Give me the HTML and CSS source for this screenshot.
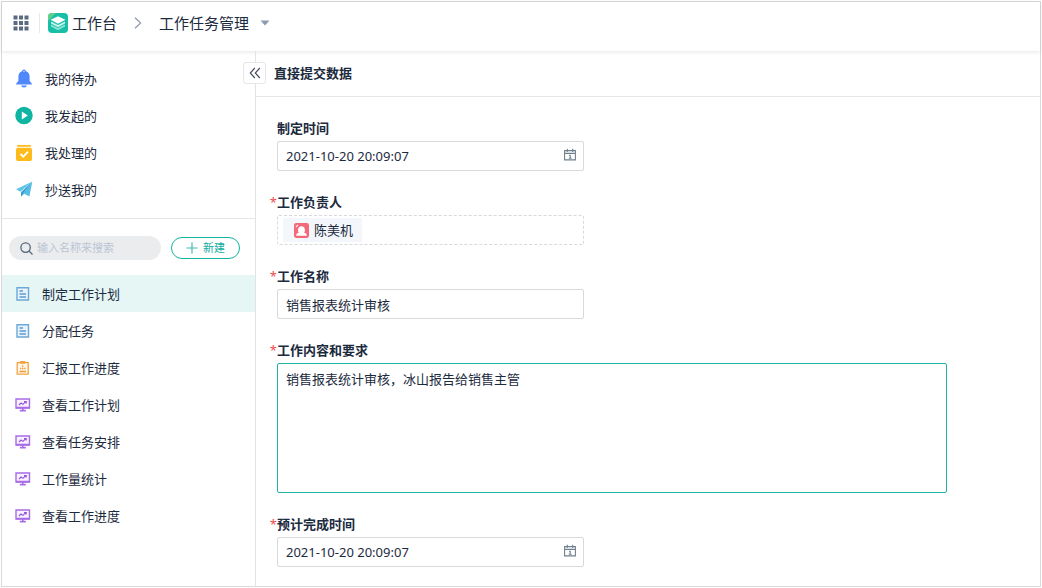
FILE: index.html
```html
<!DOCTYPE html>
<html lang="zh-CN">
<head>
<meta charset="utf-8">
<title>工作任务管理</title>
<link rel="stylesheet" href="styles.css">
</head>
<body>
<svg class="sprite" aria-hidden="true">
  <symbol id="doc" viewBox="0 0 14 14"><path d="M1 .8h11.500v12.200H1z" fill="#e9f3fb" stroke="#6ca8d8" stroke-width="1.400"/><path d="M3.500 4h3.500M3.500 7h6.500M3.500 10h6.500" stroke="#5b9bd2" stroke-width="1.300"/></symbol>
  <symbol id="clip" viewBox="0 0 14 14"><path d="M1.200 1.700h11v11.500h-11z" fill="#fff6ea" stroke="#f4a340" stroke-width="1.300"/><path d="M4.200 0h5v2.800h-5z" fill="#f4a340"/><path d="M6.700 4.200v1.500M4 7.500h1.300M6 7.500h1.400M8.200 7.500h1.300M3.500 10.500h6.500" stroke="#f09a32" stroke-width="1.300"/></symbol>
  <symbol id="screen" viewBox="0 0 16 14"><path d="M1 1h13.500v9H1z" fill="#f8f1ff" stroke="#a86ce8" stroke-width="1.400"/><path d="M1 9.600h13.500M7.800 10v2.500M4.800 12.600h6" stroke="#a86ce8" stroke-width="1.600"/><path d="M4 7l2-2 2 1.400 2.800-2.800M9 3.500h2.200v2" fill="none" stroke="#9350dc" stroke-width="1.100"/></symbol>
  <symbol id="cal" viewBox="0 0 14 14"><path d="M1.600 2.600h10.800v9.300H1.600zM1.600 5.400h10.800M4.300.8v3.200M9.700.8v3.200M6 7.200h1.200v3M5.800 10.200h2.800" fill="none" stroke="#70808e" stroke-width="1.100"/></symbol>
</svg>
<div class="app">
  <header class="topbar">
    <button class="apps" aria-label="应用">
      <svg width="16" height="16" viewBox="0 0 16 16" fill="#5a6b80"><path d="M.5.5h4v4h-4zM6 .5h4v4H6zM11.5.5h4v4h-4zM.5 6h4v4h-4zM6 6h4v4H6zM11.5 6h4v4h-4zM.5 11.5h4v4h-4zM6 11.5h4v4H6zM11.5 11.5h4v4h-4z"/></svg>
    </button>
    <a class="home" href="#">
      <svg width="20" height="20" viewBox="0 0 20 20"><rect width="20" height="20" rx="4" fill="#16bfa6"/><path d="M0 8V4a4 4 0 0 1 4-4h4z" fill="#63d08a"/><path d="M3 11.5l7 3.5 7-3.5v2L10 17.3l-7-3.8z" fill="#8de3d3"/><path d="M3 8.5l7 3.5 7-3.5v2l-7 3.8-7-3.8z" fill="#c8f3eb"/><path d="M10 3.2l7.400 3.600-7.400 4-7.400-4z" fill="#fff"/></svg>
      <span>工作台</span>
    </a>
    <svg class="sep" width="8" height="12" viewBox="0 0 8 12"><path d="M1 .8L6.600 6 1 11.200" fill="none" stroke="#8d9bab" stroke-width="1.200"/></svg>
    <button class="switch">工作任务管理
      <svg width="10" height="6" viewBox="0 0 10 6"><path d="M.5.5h9L5 5.500z" fill="#8b9bb0"/></svg>
    </button>
  </header>
  <div class="body">
    <aside class="side">
      <nav class="mine">
        <a href="#"><svg width="18" height="20" viewBox="0 0 18 20" fill="#4e88fb"><path d="M9 .6a2 2 0 0 1 2 1.600c2.400.8 3.600 2.800 3.600 5.400v4.400l2.200 2.600v1H1.200v-1l2.200-2.600V7.600c0-2.600 1.200-4.600 3.600-5.400A2 2 0 0 1 9 .6z"/><path d="M6 16.600h6c-.4 1.300-1.500 2-3 2s-2.600-.7-3-2z"/><circle cx="9" cy="2.400" r=".6" fill="#fff"/></svg>我的待办</a>
        <a href="#"><svg width="18" height="20" viewBox="0 0 18 20"><circle cx="9" cy="9.500" r="8.700" fill="#0fb5a2"/><path d="M6.800 5.500v8L12.800 9.500z" fill="#fff"/></svg>我发起的</a>
        <a href="#"><svg width="18" height="20" viewBox="0 0 18 20"><path d="M3 2h12a1 1 0 0 1 1 1v.8H2V3a1 1 0 0 1 1-1z" fill="#fdbb1c"/><rect x="1" y="4.800" width="16" height="13.200" rx="2" fill="#fdbb1c"/><path d="M5.500 11l2.800 2.700 4.700-5" fill="none" stroke="#fff" stroke-width="1.800"/></svg>我处理的</a>
        <a href="#"><svg width="18" height="20" viewBox="0 0 18 20"><path d="M17.300 1.500L1 9.300l4.400 2.400z" fill="#62c3e8"/><path d="M17.300 1.500L6 12.300v4.400l2.600-2.700z" fill="#359fc9"/><path d="M17.300 1.500L8 13l6.400 3.500z" fill="#55bce5"/></svg>抄送我的</a>
      </nav>
      <div class="tools">
        <label class="search">
          <svg width="13" height="13" viewBox="0 0 13 13" fill="none" stroke="#55677a" stroke-width="1.300"><circle cx="5.600" cy="5.600" r="4.700"/><path d="M9 9l3.500 3.500"/></svg>
          <input type="search" placeholder="输入名称来搜索" aria-label="搜索">
        </label>
        <button class="new"><svg width="12" height="12" viewBox="0 0 12 12"><path d="M6 .5v11M.5 6h11" stroke="#3bbcae" stroke-width="1.200"/></svg>新建</button>
      </div>
      <nav class="forms">
        <a class="on" href="#"><svg width="16" height="14"><use href="#doc"/></svg>制定工作计划</a>
        <a href="#"><svg width="16" height="14"><use href="#doc"/></svg>分配任务</a>
        <a href="#"><svg width="16" height="14"><use href="#clip"/></svg>汇报工作进度</a>
        <a href="#"><svg width="16" height="14"><use href="#screen"/></svg>查看工作计划</a>
        <a href="#"><svg width="16" height="14"><use href="#screen"/></svg>查看任务安排</a>
        <a href="#"><svg width="16" height="14"><use href="#screen"/></svg>工作量统计</a>
        <a href="#"><svg width="16" height="14"><use href="#screen"/></svg>查看工作进度</a>
      </nav>
      <button class="fold" aria-label="收起"><svg width="12" height="12" viewBox="0 0 12 12"><path d="M5.800 1L1.300 6l4.500 5M10.800 1L6.300 6l4.500 5" fill="none" stroke="#46505e" stroke-width="1.200"/></svg></button>
    </aside>
    <main class="main">
      <h1>直接提交数据</h1>
      <form class="form">
        <div class="field">
          <label for="start">制定时间</label>
          <div class="date"><input id="start" type="text" value="2021-10-20 20:09:07"><svg width="14" height="14"><use href="#cal"/></svg></div>
        </div>
        <div class="field">
          <span class="label required">工作负责人</span>
          <div class="people"><span class="person"><svg width="15" height="15" viewBox="0 0 14 14"><rect width="14" height="14" rx="2" fill="#f5687a"/><path d="M2 12c0-2 1.200-2.500 2.600-2.800C3 7.500 3.600 3 7 3s4 4.500 2.400 6.200c1.400.3 2.600.8 2.600 2.800z" fill="#fff"/><path d="M1.800 3.800l2-2" stroke="#fff"/></svg>陈美机</span></div>
        </div>
        <div class="field">
          <label class="required" for="name">工作名称</label>
          <input id="name" type="text" value="销售报表统计审核">
        </div>
        <div class="field wide">
          <label class="required" for="content">工作内容和要求</label>
          <textarea id="content">销售报表统计审核，冰山报告给销售主管</textarea>
        </div>
        <div class="field">
          <label class="required" for="end">预计完成时间</label>
          <div class="date"><input id="end" type="text" value="2021-10-20 20:09:07"><svg width="14" height="14"><use href="#cal"/></svg></div>
        </div>
      </form>
    </main>
  </div>
</div>
</body>
</html>
```
FILE: styles.css
```css
* { box-sizing: border-box; }
body {
  margin: 0;
  padding: 1px;
  min-height: 100vh;
  display: flex;
  background: #fff;
  color: #1c2a3e;
  font: 13px/20px "Noto Sans", "Noto Sans CJK SC", sans-serif;
}
button, input, textarea { font: inherit; color: inherit; }
button { padding: 0; border: 0; background: none; cursor: pointer; }
a { color: inherit; text-decoration: none; }
svg { display: block; flex: none; }
.sprite { position: absolute; width: 0; height: 0; }

.app {
  flex: 1;
  display: flex;
  flex-direction: column;
  border: 1px solid #d9d9d9;
}
.topbar {
  height: 49px;
  padding: 0 10px 8px 11px;
  display: flex;
  align-items: center;
  font-size: 15px;
  box-shadow: 0 1px 4px rgba(0, 0, 0, .1);
}
.apps { padding-right: 10px; border-right: 1px solid #e8e8e8; height: 20px; }
.home { display: flex; align-items: center; gap: 4px; margin-left: 8px; }
.sep { margin: 0 17px 0 17px; }
.switch { display: flex; align-items: center; gap: 11px; }

.body { flex: 1; display: flex; }
.side { position: relative; width: 254px; flex: none; border-right: 1px solid #e3e3e6; }
.mine { padding: 9px 0 10px; border-bottom: 1px solid #e6e6e8; }
.mine a, .forms a { display: flex; align-items: center; height: 37px; }
.mine a { padding-left: 13px; gap: 12px; }
.tools { display: flex; align-items: center; gap: 10px; padding: 17px 15px 15px 7px; }
.search {
  flex: 1;
  min-width: 0;
  height: 24px;
  padding: 0 11px;
  display: flex;
  align-items: center;
  gap: 4px;
  border-radius: 12px;
  background: #ebecee;
}
.search input {
  flex: 1;
  min-width: 0;
  padding: 0;
  border: 0;
  outline: 0;
  background: none;
  font-size: 11px;
}
.search input::placeholder { color: #bac5d5; }
.new {
  width: 69px;
  height: 22px;
  display: flex;
  align-items: center;
  justify-content: center;
  gap: 5px;
  border: 1px solid #14b3a2;
  border-radius: 11px;
  color: #0fae9d;
  font-size: 11px;
}
.forms a { padding-left: 13px; gap: 11px; }
.forms .on { background: #e5f6f5; }
.fold {
  position: absolute;
  top: 11px;
  right: -11px;
  width: 23px;
  height: 22px;
  display: flex;
  align-items: center;
  justify-content: center;
  border: 1px solid #e6e6e6;
  border-radius: 3px;
  background: #fff;
}

.main { flex: 1; min-width: 0; }
h1 {
  margin: 0;
  padding: 12px 18px 13px;
  border-bottom: 1px solid #e6e6e6;
  font-size: 13px;
  line-height: 20px;
}
.form { display: flex; flex-direction: column; gap: 21px; padding: 21px 93px 16px 21px; }
.field { display: flex; flex-direction: column; gap: 3px; max-width: 307px; }
.wide { max-width: none; }
.field label, .label { position: relative; font-weight: 700; }
.required::before { content: "*"; position: absolute; right: 100%; color: #ee4b4b; font-weight: 400; }
.field input, .people {
  width: 100%;
  height: 30px;
  padding: 0 8px;
  border: 1px solid #d9d9db;
  border-radius: 2px;
  background: #fff;
}
.date { position: relative; }
.date svg { position: absolute; right: 7px; top: 7px; }
.people { display: flex; align-items: center; padding: 0 5px; border-style: dashed; }
.person {
  display: flex;
  align-items: center;
  gap: 5px;
  height: 24px;
  padding: 0 9px 0 11px;
  background: #f3f7fc;
}
.field textarea {
  height: 130px;
  padding: 5px 8px;
  border: 1px solid #1fb5a8;
  border-radius: 2px;
  outline: 0;
  resize: none;
  display: block;
}
```
